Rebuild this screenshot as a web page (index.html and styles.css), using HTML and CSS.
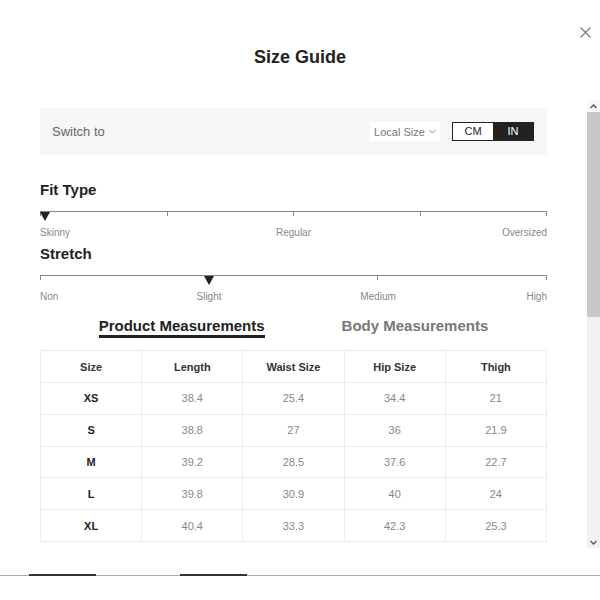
FILE: index.html
```html
<!DOCTYPE html>
<html lang="en">

<head>
    <meta charset="UTF-8">
    <meta name="viewport" content="width=device-width, initial-scale=1.0">
    <title>Size Guide</title>
    <link rel="stylesheet" href="styles.css">
</head>

<body>
    <div class="modal">
        <div class="head">
            <h2 class="title">Size Guide</h2>
            <button class="close" aria-label="close">
                <svg width="11" height="11" viewBox="0 0 11 11"><path d="M.5.5l10 10M10.5.5l-10 10" stroke="#777" stroke-width="1.1" fill="none"/></svg>
            </button>
        </div>

        <div class="body-wrap">
            <div class="scroll">
                <div class="switch-bar">
                    <span class="switch-label">Switch to</span>
                    <div class="switch-ctrls">
                        <div class="local-size">Local Size
                            <svg width="7" height="5" viewBox="0 0 7 5"><path d="M.5 1l3 3 3-3" stroke="#888" fill="none"/></svg>
                        </div>
                        <div class="unit-toggle">
                            <span class="unit">CM</span>
                            <span class="unit active">IN</span>
                        </div>
                    </div>
                </div>

                <div class="fit fit-first">
                    <h3 class="fit-title">Fit Type</h3>
                    <div class="scale">
                        <div class="scale-track"><i></i><i></i><i></i><i></i></div>
                        <span class="scale-marker" style="left:0"></span>
                    </div>
                    <div class="scale-labels cols-4">
                        <span class="lbl-start">Skinny</span>
                        <span class="lbl-mid span-2">Regular</span>
                        <span class="lbl-end">Oversized</span>
                    </div>
                </div>

                <div class="fit">
                    <h3 class="fit-title">Stretch</h3>
                    <div class="scale">
                        <div class="scale-track"><i></i><i></i><i></i></div>
                        <span class="scale-marker" style="left:calc(33.333% - 5px)"></span>
                    </div>
                    <div class="scale-labels cols-6">
                        <span class="lbl-start">Non</span>
                        <span class="lbl-mid span-2">Slight</span>
                        <span class="lbl-mid span-2">Medium</span>
                        <span class="lbl-end">High</span>
                    </div>
                </div>

                <div class="tabs">
                    <span class="tab active">Product Measurements</span>
                    <span class="tab">Body Measurements</span>
                </div>

                <table class="size-table">
                    <thead>
                        <tr><th>Size</th><th>Length</th><th>Waist Size</th><th>Hip Size</th><th>Thigh</th></tr>
                    </thead>
                    <tbody>
                        <tr><th>XS</th><td>38.4</td><td>25.4</td><td>34.4</td><td>21</td></tr>
                        <tr><th>S</th><td>38.8</td><td>27</td><td>36</td><td>21.9</td></tr>
                        <tr><th>M</th><td>39.2</td><td>28.5</td><td>37.6</td><td>22.7</td></tr>
                        <tr><th>L</th><td>39.8</td><td>30.9</td><td>40</td><td>24</td></tr>
                        <tr><th>XL</th><td>40.4</td><td>33.3</td><td>42.3</td><td>25.3</td></tr>
                    </tbody>
                </table>
            </div>

            <!-- scrollbar of the modal body -->
            <div class="scrollbar">
                <span class="sb-btn">
                    <svg width="7" height="5" viewBox="0 0 7 5"><path d="M.5 4l3-3 3 3" stroke="#555" stroke-width="1.3" fill="none"/></svg>
                </span>
                <span class="sb-thumb"></span>
                <span class="sb-track"></span>
                <span class="sb-btn">
                    <svg width="7" height="5" viewBox="0 0 7 5"><path d="M.5 1l3 3 3-3" stroke="#555" stroke-width="1.3" fill="none"/></svg>
                </span>
            </div>
        </div>

        <div class="page-tabs">
            <span></span>
            <span></span>
        </div>
    </div>
</body>

</html>
```

FILE: styles.css
```css
* {
    box-sizing: border-box;
}

body {
    margin: 0;
    background: #fff;
    font-family: "Liberation Sans", Arial, sans-serif;
    color: #222;
}

.modal {
    width: 600px;
    height: 600px;
    display: flex;
    flex-direction: column;
    position: relative;
}

.head {
    height: 100px;
    padding-top: 14px;
    display: flex;
    align-items: center;
    justify-content: center;
}

.title {
    margin: 0;
    font-size: 18px;
    font-weight: 700;
    color: #222;
}

.close {
    position: absolute;
    top: 27px;
    right: 9px;
    border: 0;
    background: none;
    padding: 0;
    line-height: 0;
}

/* scrolling body */
.body-wrap {
    height: 448px;
    display: flex;
}

.scroll {
    flex: 1;
    overflow: hidden;
    padding: 8px 40px 0 40px;
}

.scrollbar {
    width: 13px;
    display: flex;
    flex-direction: column;
    background: #f1f1f1;
}

.sb-btn {
    height: 12px;
    display: flex;
    align-items: center;
    justify-content: center;
}

.sb-btn:first-child {
    background: #f8f8f8;
}

.sb-thumb {
    height: 205px;
    background: #c8c8c8;
}

.sb-track {
    flex: 1;
}

.switch-bar {
    height: 47px;
    background: #f6f6f6;
    display: flex;
    align-items: center;
    justify-content: space-between;
    padding: 0 13px 0 12px;
}

.switch-label {
    font-size: 13px;
    color: #666;
}

.switch-ctrls {
    display: flex;
    align-items: center;
    gap: 12px;
}

.local-size {
    width: 70px;
    height: 19px;
    background: #fff;
    font-size: 11px;
    color: #777;
    display: flex;
    align-items: center;
    justify-content: center;
    gap: 4px;
}

.unit-toggle {
    display: flex;
    border: 1px solid #222;
    height: 19px;
}

.unit {
    width: 40px;
    font-size: 11px;
    line-height: 17px;
    text-align: center;
    color: #222;
    background: #fff;
}

.unit.active {
    background: #222;
    color: #fff;
}

/* fit sliders */
.fit-title {
    margin: 0;
    font-size: 15px;
    line-height: 18px;
    font-weight: 700;
    color: #222;
}

.fit {
    margin-top: 6px;
}

.fit-first {
    margin-top: 26px;
}

.scale {
    position: relative;
    margin-top: 12px;
}

.scale-track {
    display: flex;
    height: 5px;
    border-left: 1px solid #888;
}

.scale-track i {
    flex: 1;
    border-top: 1px solid #888;
    border-right: 1px solid #888;
}

.scale-marker {
    position: absolute;
    top: 1px;
    width: 0;
    height: 0;
    border-left: 5px solid transparent;
    border-right: 5px solid transparent;
    border-top: 9px solid #222;
}

.scale-labels {
    display: grid;
    margin-top: 11px;
    font-size: 10px;
    line-height: 12px;
    color: #888;
}

.cols-4 {
    grid-template-columns: repeat(4, 1fr);
}

.cols-6 {
    grid-template-columns: repeat(6, 1fr);
}

.span-2 {
    grid-column: span 2;
}

.lbl-mid {
    text-align: center;
}

.lbl-end {
    text-align: right;
}

/* tabs */
.tabs {
    display: flex;
    justify-content: center;
    gap: 77px;
    margin-top: 14px;
}

.tab {
    font-size: 15px;
    line-height: 18px;
    font-weight: 700;
    color: #777;
    border-bottom: 3px solid transparent;
}

.tab.active {
    color: #222;
    border-bottom-color: #222;
}

/* table */
.size-table {
    width: 100%;
    margin-top: 12px;
    border-collapse: collapse;
    table-layout: fixed;
    font-size: 11px;
}

.size-table th,
.size-table td {
    border: 1px solid #ebebeb;
    height: 31.8px;
    padding: 0;
    text-align: center;
}

.size-table thead th {
    height: 32px;
    color: #333;
}

.size-table th {
    font-weight: 700;
    color: #222;
}

.size-table td {
    color: #888;
}

/* page behind */
.page-tabs {
    margin-top: 27px;
    border-top: 1px solid #aaa;
    display: flex;
    gap: 84px;
    padding-left: 29px;
}

.page-tabs span {
    width: 67px;
    margin-top: -2px;
    border-top: 2px solid #333;
}
```
